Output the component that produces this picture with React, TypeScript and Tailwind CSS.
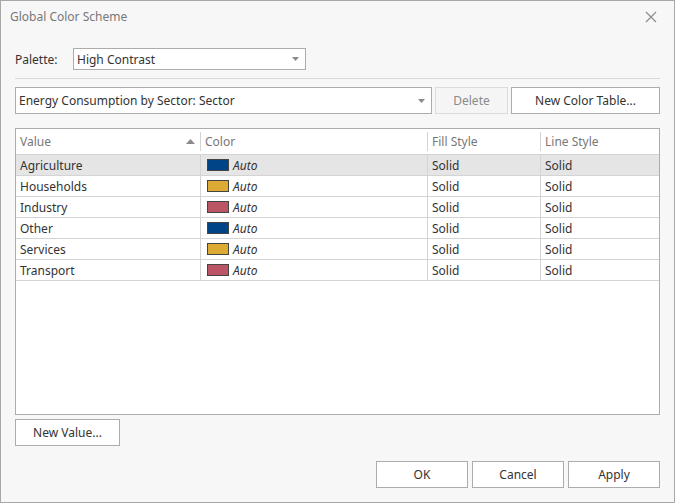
import React from "react";

const rows = [
  { name: "Agriculture", color: "#004488", selected: true },
  { name: "Households", color: "#ddaa33" },
  { name: "Industry", color: "#bb5566" },
  { name: "Other", color: "#004488" },
  { name: "Services", color: "#ddaa33" },
  { name: "Transport", color: "#bb5566" },
];

function Caret() {
  return (
    <svg width="7" height="4" viewBox="0 0 7 4" className="shrink-0">
      <path d="M0 0 H7 L3.5 4 Z" fill="#8a8a8a" />
    </svg>
  );
}

function Btn({ children, className = "", disabled = false }: { children: React.ReactNode; className?: string; disabled?: boolean }) {
  return (
    <div
      className={
        "h-[27px] flex items-center justify-center border " +
        (disabled ? "bg-[#f5f5f5] border-[#dcdcdc] text-[#8a8a8a] " : "bg-white border-[#acacac] text-[#333] ") +
        className
      }
    >
      {children}
    </div>
  );
}

export default function App() {
  return (
    <div
      className="w-[675px] h-[503px] bg-[#f7f7f7] border border-[#a8a8a8] flex flex-col text-[12px] text-[#333] overflow-hidden"
      style={{ fontFamily: '"Noto Sans", "Open Sans", sans-serif' }}
    >
      {/* title bar */}
      <div className="h-[31px] flex items-center justify-between pl-[9px] pr-[17px]">
        <span className="text-[#777] text-[12px]">Global Color Scheme</span>
        <svg width="12" height="12" viewBox="0 0 12 12">
          <path d="M1 1 L11 11 M11 1 L1 11" stroke="#8c8c8c" strokeWidth="1.2" />
        </svg>
      </div>

      <div className="px-[14px] flex flex-col">
        {/* palette row */}
        <div className="mt-[16px] flex items-center h-[22px]">
          <span className="w-[58px] pt-[1px]">Palette:</span>
          <div className="w-[233px] h-[22px] bg-white border border-[#acacac] flex items-center justify-between pl-[3px] pr-[6px]">
            <span className="pt-[1px]">High Contrast</span>
            <Caret />
          </div>
        </div>

        <div className="mt-[8px] h-px bg-[#d9d9d9]" />

        {/* color table row */}
        <div className="mt-[8px] flex gap-[3px]">
          <div className="w-[417px] h-[27px] bg-white border border-[#acacac] flex items-center justify-between pl-[3px] pr-[6px]">
            <span>Energy Consumption by Sector: Sector</span>
            <Caret />
          </div>
          <Btn disabled className="w-[73px]">Delete</Btn>
          <Btn className="w-[149px]">New Color Table...</Btn>
        </div>

        {/* grid */}
        <div className="mt-[14px] h-[287px] bg-white border border-[#acacac] flex flex-col">
          <div className="h-[26px] flex border-b border-[#d4d4d4] text-[#777]">
            <div className="w-[185px] flex items-center justify-between pl-[4px] pr-[6px] relative">
              <span>Value</span>
              <svg width="9" height="5" viewBox="0 0 9 5">
                <path d="M0 5 H9 L4.5 0 Z" fill="#8a8a8a" />
              </svg>
              <div className="absolute right-0 top-[3px] bottom-[3px] w-px bg-[#d4d4d4]" />
            </div>
            <div className="w-[227px] flex items-center pl-[4px] relative">
              <span>Color</span>
              <div className="absolute right-0 top-[3px] bottom-[3px] w-px bg-[#d4d4d4]" />
            </div>
            <div className="w-[113px] flex items-center pl-[4px] relative">
              <span>Fill Style</span>
              <div className="absolute right-0 top-[3px] bottom-[3px] w-px bg-[#d4d4d4]" />
            </div>
            <div className="flex-1 flex items-center pl-[4px]">
              <span>Line Style</span>
            </div>
          </div>
          {rows.map((r) => (
            <div
              key={r.name}
              className={"h-[21px] flex border-b border-[#d4d4d4] " + (r.selected ? "bg-[#e5e5e5]" : "")}
            >
              <div className="w-[185px] flex items-center pl-[4px] pt-[1px] border-r border-[#d4d4d4]">{r.name}</div>
              <div className="w-[227px] flex items-center pl-[6px] gap-[4px] border-r border-[#d4d4d4]">
                <div className="w-[22px] h-[12px] border border-[#444]" style={{ backgroundColor: r.color }} />
                <span className="italic pt-[1px]">Auto</span>
              </div>
              <div className="w-[113px] flex items-center pl-[4px] pt-[1px] border-r border-[#d4d4d4]">Solid</div>
              <div className="flex-1 flex items-center pl-[4px] pt-[1px]">Solid</div>
            </div>
          ))}
        </div>

        <div className="mt-[4px] flex">
          <Btn className="w-[105px]">New Value...</Btn>
        </div>

        <div className="mt-[15px] flex justify-end gap-[4px]">
          <Btn className="w-[92px]">OK</Btn>
          <Btn className="w-[92px]">Cancel</Btn>
          <Btn className="w-[92px]">Apply</Btn>
        </div>
      </div>
    </div>
  );
}
